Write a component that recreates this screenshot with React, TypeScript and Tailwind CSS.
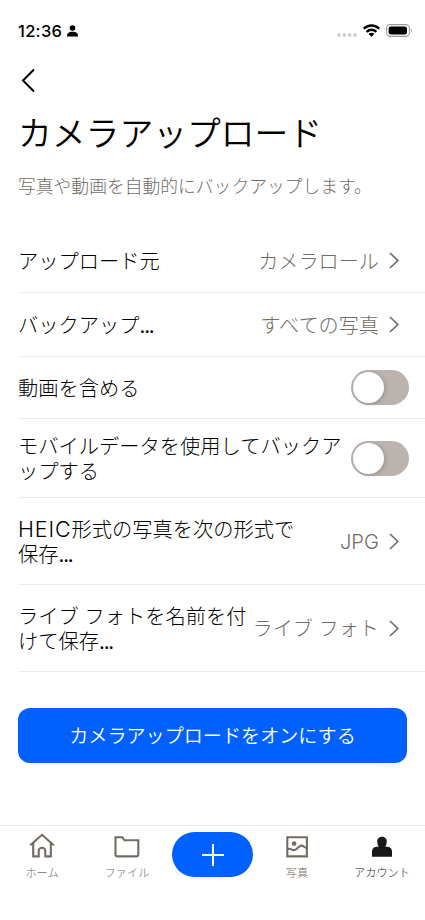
import React from "react";

interface SettingRow {
  label: React.ReactNode[];
  value?: string;
  height: string;
}

const Dots = () => <span className="font-normal tracking-[-1.2px]">...</span>;

const rows: SettingRow[] = [
  { label: ["アップロード元"], value: "カメラロール", height: "h-16" },
  { label: [<>バックアップ<Dots /></>], value: "すべての写真", height: "h-16" },
  { label: ["動画を含める"], height: "h-[62px]" },
  { label: ["モバイルデータを使用してバックア", "ップする"], height: "h-[79px]" },
  {
    label: [<><span className="text-[21.5px] tracking-[0.9px]">HEIC</span>形式の写真を次の形式で</>, <>保存<Dots /></>],
    value: "JPG",
    height: "h-[87px]",
  },
  { label: ["ライブ フォトを名前を付", <>けて保存<Dots /></>], value: "ライブ フォト", height: "h-[87px]" },
];

function StatusBar() {
  return (
    <div className="flex h-[62px] items-center justify-between pl-[18px] pr-[12px]">
      <div className="flex items-center gap-[5px]">
        <span className="text-[16.5px] font-medium leading-5 tracking-[0.3px]">12:36</span>
        <svg width="11" height="12" viewBox="0 0 11 12" fill="currentColor">
          <circle cx="5.5" cy="3" r="2.8" />
          <path d="M0 11.5V10.6C0 8.2 2.3 6.7 5.5 6.7S11 8.2 11 10.6V11.5Z" />
        </svg>
      </div>
      <div className="flex items-center">
        <svg className="mt-[8px] mr-[6px]" width="20" height="4" viewBox="0 0 20 4" fill="#cfcfcf">
          <circle cx="2" cy="2" r="1.9" />
          <circle cx="7.3" cy="2" r="1.9" />
          <circle cx="12.6" cy="2" r="1.9" />
          <circle cx="17.9" cy="2" r="1.9" />
        </svg>
        <svg className="mb-px mr-[6px]" width="17" height="13" viewBox="0 0 17 13" fill="none" stroke="currentColor" strokeWidth="2.4">
          <path d="M.8 4.7C5.1.4 11.9.4 16.2 4.7" />
          <path d="M3.6 7.8C6.4 5.1 10.6 5.1 13.4 7.8" />
          <path d="M8.5 12.8 5.6 9.9C7.2 8.5 9.8 8.5 11.4 9.9Z" fill="currentColor" stroke="none" />
        </svg>
        <svg className="mb-px" width="27" height="13" viewBox="0 0 27 13">
          <rect x=".6" y=".6" width="22.8" height="11.8" rx="3.8" fill="none" stroke="#9b9b9b" strokeWidth="1.1" />
          <rect x="2.6" y="2.5" width="18.4" height="8" rx="2.2" fill="#000" />
          <path d="M24.9 4.6C26.3 5.2 26.3 7.8 24.9 8.4Z" fill="#9b9b9b" />
        </svg>
      </div>
    </div>
  );
}

function Toggle() {
  return (
    <button className="mr-4 flex h-[35px] w-[58px] shrink-0 items-center rounded-full bg-[#bbb3ad] pl-[2px]">
      <span className="h-[31px] w-[31px] rounded-full bg-white shadow-[1px_1px_4px_rgba(0,0,0,0.2)]" />
    </button>
  );
}

function Row({ label, value, height }: SettingRow) {
  return (
    <div className={`ml-[18px] flex items-center justify-between border-b border-[#ececec] ${height}`}>
      <div className="mt-px whitespace-nowrap text-[20.25px] leading-[25px]">
        {label.map((line, i) => (
          <div key={i} className="h-[25px]">{line}</div>
        ))}
      </div>
      {value ? (
        <div className="mr-[26px] flex items-center gap-[10px] whitespace-nowrap text-[#736c64]">
          <span className="mt-px text-[20.15px] leading-[25px]">{value}</span>
          <svg width="10" height="17" viewBox="0 0 10 17" fill="none" stroke="currentColor" strokeWidth="1.7">
            <path d="M1 1 8.8 8.5 1 16" />
          </svg>
        </div>
      ) : (
        <Toggle />
      )}
    </div>
  );
}

function Tab({ label, active, children }: { label: string; active?: boolean; children: React.ReactNode }) {
  return (
    <div className={`flex w-[85px] flex-col items-center pt-[7px] ${active ? "text-[#1a1918]" : "text-[#736c64]"}`}>
      <svg className="mr-[2px]" width="28" height="28" viewBox="0 0 28 28" fill="none" stroke="currentColor" strokeWidth="2.1">
        {children}
      </svg>
      <span className="mr-px mt-[4px] whitespace-nowrap text-[11.2px] leading-4">{label}</span>
    </div>
  );
}

export default function App() {
  return (
    <div className="flex h-[920px] w-[425px] flex-col overflow-hidden bg-white font-['Inter','Noto_Sans_CJK_JP',sans-serif] font-light text-black">
      <StatusBar />

      <svg className="ml-[21px] mt-[6px]" width="14" height="25" viewBox="0 0 14 25" fill="none" stroke="currentColor" strokeWidth="2">
        <path d="M13 1.5 2 12.5 13 23.5" />
      </svg>

      <h1 className="ml-[18px] mt-[20px] text-[33.8px] font-[350] leading-[42px]">カメラアップロード</h1>
      <p className="ml-[18px] mt-[21px] text-[17.8px] leading-[22px] text-[#736c64]">
        写真や動画を自動的にバックアップします。
      </p>

      <div className="mt-[31px]">
        {rows.map((row, i) => (
          <Row key={i} {...row} />
        ))}
      </div>

      <button className="ml-[18px] mt-[36px] h-[55px] w-[389px] rounded-[12px] bg-[#0061fe] pt-px text-[19.1px] font-[350] text-white">
        カメラアップロードをオンにする
      </button>

      <nav className="mt-auto flex h-[95px] border-t-[1.5px] border-[#e9e9e9]">
        <Tab label="ホーム">
          <path d="M2.2 12.3 14 1.8 25.8 12.3M5.2 10.2V23.4H10.7V18C10.7 13.6 17.3 13.6 17.3 18V23.4H22.8V10.2" />
        </Tab>
        <Tab label="ファイル">
          <path d="M2.5 4.2H9.3L11.5 7.3H25.3V21.4Q25.3 23.4 23.3 23.4H4.5Q2.5 23.4 2.5 21.4Z" />
        </Tab>
        <div className="flex w-[85px] justify-center pt-[6px]">
          <button className="flex h-[45px] w-[81px] items-center justify-center rounded-full bg-[#0061fe] text-white">
            <svg width="24" height="24" viewBox="0 0 24 24" stroke="currentColor" strokeWidth="2">
              <path d="M12 1V23M1 12H23" />
            </svg>
          </button>
        </div>
        <Tab label="写真">
          <path d="M4.3 4.2H23.9V23.4H4.3Z" />
          <circle cx="11.1" cy="10.6" r="2.3" fill="currentColor" stroke="none" />
          <path d="M4.3 16.4C7.5 14 8.4 17.8 11.5 17C14.6 16.2 16 12 19 12.6C21 13 21.5 15.1 23.9 14.9" />
        </Tab>
        <Tab label="アカウント" active>
          <path d="M4 23.8V18.6Q4 14.4 8.4 13.8H10.6Q9.2 11.4 9.2 8.4C9.2 2.2 18.8 2.2 18.8 8.4Q18.8 11.4 17.4 13.8H19.6Q24 14.4 24 18.6V23.8Z" fill="currentColor" stroke="none" />
        </Tab>
      </nav>
    </div>
  );
}
